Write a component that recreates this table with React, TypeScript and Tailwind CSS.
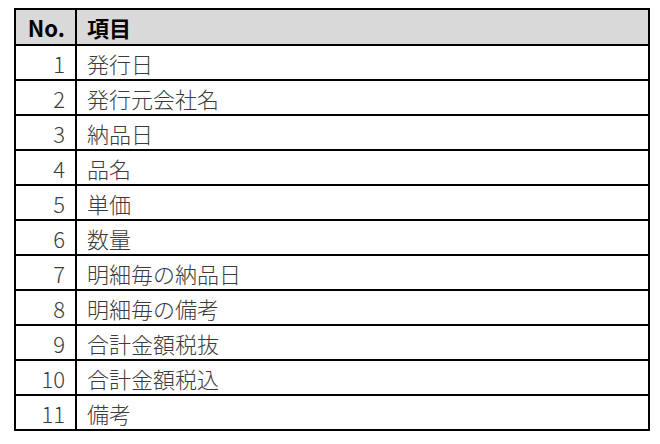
const ITEMS = [
  "発行日",
  "発行元会社名",
  "納品日",
  "品名",
  "単価",
  "数量",
  "明細毎の納品日",
  "明細毎の備考",
  "合計金額税抜",
  "合計金額税込",
  "備考",
];

export default function App() {
  return (
    <div className="w-[660px] h-[444px] bg-white pt-[8px] pl-[14px] font-['Noto_Sans_CJK_JP','Noto_Sans',sans-serif]">
      <table className="w-[636px] border-collapse border-2 border-black">
        <thead>
          <tr className="h-[36px] bg-[#d9d9d9] text-black">
            <th className="w-[61px] border-2 border-black pr-[10px] text-right text-[22px] font-bold leading-none">
              No.
            </th>
            <th className="border-2 border-black pl-[10px] text-left text-[22px] font-bold leading-none">
              項目
            </th>
          </tr>
        </thead>
        <tbody>
          {ITEMS.map((item, i) => (
            <tr key={i} className="h-[35px] text-[#3b3b3b]">
              <td className="border-2 border-black pr-[10px] text-right text-[22px] font-light leading-none">
                {i + 1}
              </td>
              <td className="border-2 border-black pl-[10px] text-left text-[22px] font-light leading-none">
                {item}
              </td>
            </tr>
          ))}
        </tbody>
      </table>
    </div>
  );
}
